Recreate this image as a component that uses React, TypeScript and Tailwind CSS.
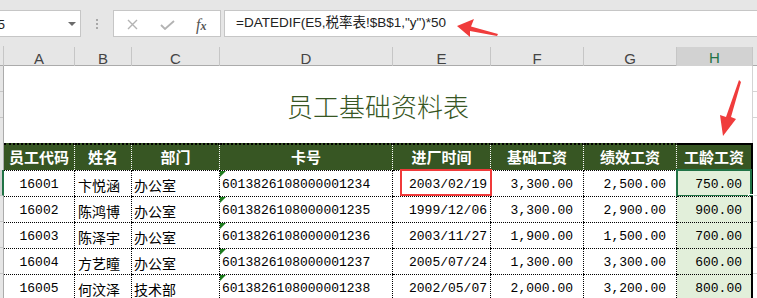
import React from "react";

const GRID =
  "grid grid-cols-[4px_71px_57px_88px_173px_98px_93px_93px_76px_1fr]";

const letters = ["A", "B", "C", "D", "E", "F", "G", "H"];
const heads = ["员工代码", "姓名", "部门", "卡号", "进厂时间", "基础工资", "绩效工资", "工龄工资"];
const rows = [
  ["16001", "卞悦涵", "办公室", "6013826108000001234", "2003/02/19", "3,300.00", "2,500.00", "750.00"],
  ["16002", "陈鸿博", "办公室", "6013826108000001235", "1999/12/06", "3,300.00", "2,900.00", "900.00"],
  ["16003", "陈泽宇", "办公室", "6013826108000001236", "2003/11/27", "1,900.00", "1,500.00", "700.00"],
  ["16004", "方艺瞳", "办公室", "6013826108000001237", "2005/07/24", "1,300.00", "3,300.00", "600.00"],
  ["16005", "何汶泽", "技术部", "6013826108000001238", "2002/05/07", "2,000.00", "3,200.00", "800.00"],
];

const MONO = "font-['Liberation_Mono','Noto_Sans_CJK_SC',monospace] text-[13px] text-black";
const CJK = "font-['Noto_Sans_CJK_SC',sans-serif] text-[14px] text-black";

export default function App() {
  return (
    <div className="relative w-[757px] h-[298px] overflow-hidden bg-[#e6e6e6] font-['Liberation_Sans',sans-serif]">
      {/* Formula bar */}
      <div className="h-[46px] flex items-start pt-[10px]">
        <div className="relative w-[81px] h-[27px] bg-white border border-[#c6c6c6] border-l-0 overflow-hidden">
          <span className="absolute left-[-11px] top-[4px] text-[13px] text-[#222] font-['Liberation_Sans',sans-serif]">E5</span>
          <div className="absolute left-[68px] top-[11px] w-0 h-0 border-l-[4px] border-r-[4px] border-t-[4px] border-l-transparent border-r-transparent border-t-[#6b6b6b]" />
        </div>
        <div className="w-[32px] h-[27px] flex flex-col items-center justify-center gap-[2px]">
          <div className="w-[2px] h-[2px] bg-[#a8a8a8]" />
          <div className="w-[2px] h-[2px] bg-[#a8a8a8]" />
          <div className="w-[2px] h-[2px] bg-[#a8a8a8]" />
        </div>
        <div className="relative w-[108px] h-[27px] bg-white border border-[#c6c6c6]">
          <svg className="absolute left-[13px] top-[8px]" width="11" height="11" viewBox="0 0 11 11">
            <path d="M1 1 L10 10 M10 1 L1 10" stroke="#b3b3b3" strokeWidth="1.4" fill="none" />
          </svg>
          <svg className="absolute left-[46px] top-[9px]" width="15" height="10" viewBox="0 0 15 10">
            <path d="M1 5 L5 9 L14 1" stroke="#b3b3b3" strokeWidth="1.8" fill="none" />
          </svg>
          <span className="absolute left-[82px] top-[2px] text-[16px] italic text-[#555] font-['Liberation_Serif',serif]">
            f<span className="text-[12px] font-bold">x</span>
          </span>
        </div>
        <div className="ml-[3px] flex-1 h-[27px] bg-white border border-[#c6c6c6] border-r-0 pl-[11px] flex items-center">
          <span className="text-[13.5px] text-[#222] font-['Liberation_Sans','Noto_Sans_CJK_SC',sans-serif] whitespace-nowrap">
            =DATEDIF(E5,税率表!$B$1,"y")*50
          </span>
        </div>
      </div>

      {/* Column headers */}
      <div className={`${GRID} h-[20px] border-b border-[#ababab]`}>
        <div className="border-r border-[#c6c6c6]" />
        {letters.map((l) => (
          <div
            key={l}
            className={
              l === "H"
                ? "flex items-center justify-center bg-[#d2d2d2] border-b-2 border-[#217346] text-[15px] text-[#217346] border-r border-r-[#c6c6c6] mt-[1px]"
                : "flex items-center justify-center text-[15px] text-[#444] border-r border-[#c6c6c6] mt-[1px]"
            }
          >
            {l}
          </div>
        ))}
        <div />
      </div>

      {/* Title row (merged rows 1-3) */}
      <div className={`${GRID} h-[77px]`}>
        <div className="flex flex-col border-r border-[#ababab]">
          <div className="h-[26px] border-b border-[#c6c6c6]" />
          <div className="h-[26px] border-b border-[#c6c6c6]" />
          <div className="flex-1" />
        </div>
        <div className="col-span-8 bg-white flex items-center justify-center border-r border-[#d4d4d4] pt-[2px]">
          <span className="text-[26px] font-light text-[#375623] font-['Noto_Sans_CJK_SC',sans-serif]">
            员工基础资料表
          </span>
        </div>
        <div className="bg-white flex flex-col">
          <div className="h-[26px] border-b border-[#d4d4d4]" />
          <div className="h-[26px] border-b border-[#d4d4d4]" />
          <div className="flex-1" />
        </div>
      </div>

      {/* Header row */}
      <div className={`${GRID} h-[27px]`}>
        <div className="border-r border-[#ababab]" />
        {heads.map((h, i) => (
          <div
            key={h}
            className={
              "bg-[#375623] border-t-2 border-t-black flex items-center justify-center text-white font-bold text-[15px] font-['Noto_Sans_CJK_SC',sans-serif] " +
              (i === 7 ? "border-r-2 border-r-black" : "border-r border-dotted border-r-white")
            }
          >
            {h}
          </div>
        ))}
        <div className="bg-white" />
      </div>

      {/* Data rows */}
      {rows.map((r, ri) => (
        <div key={ri} className={`${GRID} h-[26px]`}>
          <div
            className={
              ri === 0
                ? "border-r-2 border-[#217346] bg-[#d2d2d2] border-b border-b-[#c6c6c6]"
                : "border-r border-[#ababab] border-b border-b-[#c6c6c6]"
            }
          />
          <div className={`bg-white border-t border-dotted border-black border-r flex items-center justify-center pt-[3px] ${MONO}`}>
            {r[0]}
          </div>
          <div className={`bg-white border-t border-dotted border-black border-r flex items-center pl-[3px] pt-[3px] ${CJK}`}>
            {r[1]}
          </div>
          <div className={`bg-white border-t border-dotted border-black border-r flex items-center pl-[2px] pt-[3px] ${CJK}`}>
            {r[2]}
          </div>
          <div className={`relative bg-white border-t border-dotted border-black border-r flex items-center pl-[2px] pt-[3px] ${MONO}`}>
            <svg className="absolute left-0 top-0" width="6" height="6" viewBox="0 0 6 6">
              <polygon points="0,0 6,0 0,6" fill="#1e7b1e" />
            </svg>
            {r[3]}
          </div>
          <div className={`relative bg-white border-t border-dotted border-black border-r flex items-center justify-end pr-[3px] pt-[3px] ${MONO}`}>
            {ri === 0 && (
              <div className="absolute left-[7px] top-[-2px] right-[-2px] bottom-0 border-2 border-solid border-[#f03a3a]" />
            )}
            {r[4]}
          </div>
          <div className={`bg-white border-t border-dotted border-black border-r flex items-center justify-end pr-[10px] pt-[3px] ${MONO}`}>
            {r[5]}
          </div>
          <div className={`bg-white border-t border-dotted border-black border-r flex items-center justify-end pr-[10px] pt-[3px] ${MONO}`}>
            {r[6]}
          </div>
          <div className={`relative bg-[#e2efda] border-r-2 border-r-black flex items-center justify-end pr-[9px] pt-[3px] ${MONO}`}>
            <div className="absolute left-0 right-0 top-0 border-t border-dotted border-black" />
            {ri === 0 && (
              <>
                <div className="absolute left-[-1px] top-[-1px] right-[-1px] bottom-[-1px] border-2 border-solid border-[#217346]" />
                <div className="absolute right-[-3px] bottom-[-4px] w-[6px] h-[6px] bg-[#217346] border border-solid border-white" />
              </>
            )}
            {r[7]}
          </div>
          <div className="bg-white border-b border-[#d4d4d4]" />
        </div>
      ))}

      {/* Annotation arrows */}
      <svg className="absolute left-0 top-0 pointer-events-none" width="757" height="298" viewBox="0 0 757 298">
        <polygon points="457,26 474,19 471,26.5 498,34 497,36 470,31 470,37" fill="#f03c3c" />
        <polygon points="739,80 741,82 731,117 736,119 723,136 720,115 726,117" fill="#f03c3c" />
      </svg>
    </div>
  );
}
